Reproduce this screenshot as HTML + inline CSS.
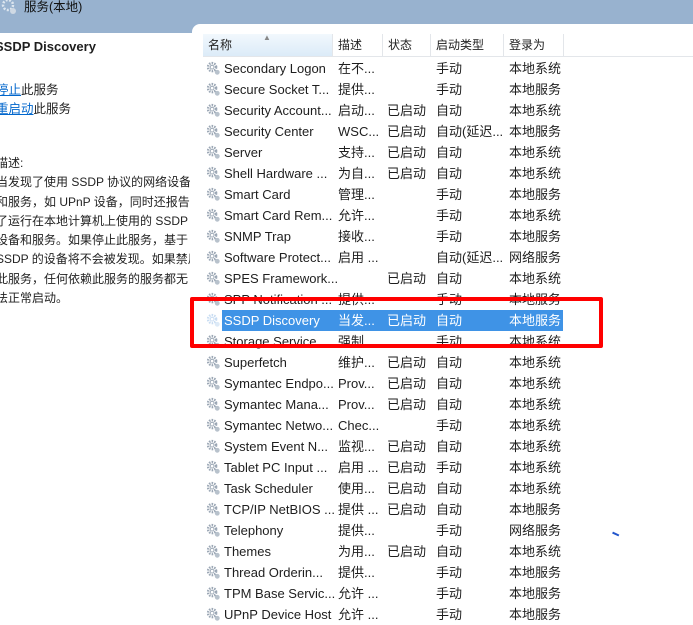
<!DOCTYPE html>
<html><head><meta charset="utf-8"><style>
*{margin:0;padding:0;box-sizing:border-box}
body{width:693px;height:624px;overflow:hidden;background:#fff;font-family:"Liberation Sans","Noto Sans CJK SC",sans-serif;font-size:13px;color:#1e1e1e;position:relative}
.top{position:absolute;left:0;top:0;width:693px;height:33px;background:#98b2cf}
.top2{position:absolute;left:195px;top:0;width:498px;height:24px;background:#98b2cf}
.title{position:absolute;left:24px;top:0;font-size:12.5px;color:#111;line-height:15px}
.left{position:absolute;left:0;top:33px;width:190px;height:591px;background:#fff;overflow:hidden}
.right{position:absolute;left:192px;top:24px;width:501px;height:600px;background:#fff;border-top-left-radius:8px}
.hdr{position:absolute;top:34px;height:23px;line-height:23px;font-size:12px;border-right:1px solid #e3e6ea;padding-left:5px;color:#222;border-bottom:1px solid #e3e6ea}
.row{position:absolute;left:203px;height:21px;line-height:21px;font-size:13px;white-space:nowrap}
.row span{position:absolute;top:0}
.g{position:absolute;left:3px;top:3px;width:15px;height:15px}
.sel{position:absolute;left:222px;top:310px;width:341px;height:21px;background:#3f93e6}
.red{position:absolute;left:190px;top:297px;width:413px;height:51px;border:4px solid #f00;border-radius:2px}
.desc{position:absolute;left:-4px;top:121px;font-size:12px;line-height:19.3px;white-space:nowrap;color:#222}
a{color:#06c;text-decoration:underline}
</style></head><body>
<div class="top"></div><div class="top2"></div>
<svg style="position:absolute;left:1px;top:0" width="16" height="14"><circle cx="7" cy="5" r="5" fill="none" stroke="#dde6ef" stroke-width="2.5" stroke-dasharray="2 1.5"/><circle cx="12" cy="11" r="3" fill="#cfd9e4"/></svg>
<div class="title">服务(本地)</div>
<div class="left">
<div style="position:absolute;left:-5px;top:6px;font-weight:bold;font-size:13px;white-space:nowrap">SSDP Discovery</div>
<div style="position:absolute;left:-4px;top:46px;font-size:12.5px;white-space:nowrap"><a>停止</a>此服务</div>
<div style="position:absolute;left:-4px;top:65px;font-size:12.5px;white-space:nowrap"><a>重启动</a>此服务</div>
<div class="desc">描述:<br>当发现了使用 SSDP 协议的网络设备<br>和服务，如 UPnP 设备，同时还报告<br>了运行在本地计算机上使用的 SSDP<br>设备和服务。如果停止此服务，基于<br>SSDP 的设备将不会被发现。如果禁用<br>此服务，任何依赖此服务的服务都无<br>法正常启动。</div>
</div>
<div class="right"></div>
<div class="hdr" style="left:203px;width:130px;background:linear-gradient(#f2f8fd,#dcebf8)">名称<span style="position:absolute;left:60px;top:-8px;font-size:8px;color:#888">▲</span></div>
<div class="hdr" style="left:333px;width:50px">描述</div>
<div class="hdr" style="left:383px;width:48px">状态</div>
<div class="hdr" style="left:431px;width:73px">启动类型</div>
<div class="hdr" style="left:504px;width:60px">登录为</div>
<div class="hdr" style="left:564px;width:129px;border-right:none"></div>
<div class="sel"></div>
<div id="rows"></div>
<div class="red"></div>
<div style="position:absolute;left:612px;top:533px;width:7px;height:3px;border-top:2px solid #2255cc;transform:rotate(25deg)"></div>
<script>
var d=[["Secondary Logon","在不...","","手动","本地系统"],["Secure Socket T...","提供...","","手动","本地服务"],["Security Account...","启动...","已启动","自动","本地系统"],["Security Center","WSC...","已启动","自动(延迟...","本地服务"],["Server","支持...","已启动","自动","本地系统"],["Shell Hardware ...","为自...","已启动","自动","本地系统"],["Smart Card","管理...","","手动","本地服务"],["Smart Card Rem...","允许...","","手动","本地系统"],["SNMP Trap","接收...","","手动","本地服务"],["Software Protect...","启用 ...","","自动(延迟...","网络服务"],["SPES Framework...","","已启动","自动","本地系统"],["SPP Notification ...","提供...","","手动","本地服务"],["SSDP Discovery","当发...","已启动","自动","本地服务"],["Storage Service","强制...","","手动","本地系统"],["Superfetch","维护...","已启动","自动","本地系统"],["Symantec Endpo...","Prov...","已启动","自动","本地系统"],["Symantec Mana...","Prov...","已启动","自动","本地系统"],["Symantec Netwo...","Chec...","","手动","本地系统"],["System Event N...","监视...","已启动","自动","本地系统"],["Tablet PC Input ...","启用 ...","已启动","手动","本地系统"],["Task Scheduler","使用...","已启动","自动","本地系统"],["TCP/IP NetBIOS ...","提供 ...","已启动","自动","本地服务"],["Telephony","提供...","","手动","网络服务"],["Themes","为用...","已启动","自动","本地系统"],["Thread Orderin...","提供...","","手动","本地服务"],["TPM Base Servic...","允许 ...","","手动","本地服务"],["UPnP Device Host","允许 ...","","手动","本地服务"]];
var gear='<svg class="g" viewBox="0 0 16 16"><g fill="none" stroke="COL" stroke-width="2.6" stroke-dasharray="1.6 1.2"><circle cx="6.5" cy="6.5" r="4.3"/></g><circle cx="6.5" cy="6.5" r="2" fill="#fff" stroke="COL" stroke-width="1"/><circle cx="12" cy="12" r="2.6" fill="COL2"/></svg>';
var h='';
d.forEach(function(r,i){var y=58+i*21;var s=i==12;var c=s?'#fff':'#1e1e1e';
var gc=s?'#c8dcf2':'#9aa6b4',gc2=s?'#ddeaf7':'#b8c2cc';
h+='<div class="row" style="top:'+y+'px;color:'+c+';width:400px">'+gear.replace(/COL2/g,gc2).replace(/COL/g,gc)+'<span style="left:21px">'+r[0]+'</span><span style="left:135px">'+r[1]+'</span><span style="left:184px">'+r[2]+'</span><span style="left:233px">'+r[3]+'</span><span style="left:306px">'+r[4]+'</span></div>';});
document.getElementById('rows').innerHTML=h;
</script>
</body></html>
